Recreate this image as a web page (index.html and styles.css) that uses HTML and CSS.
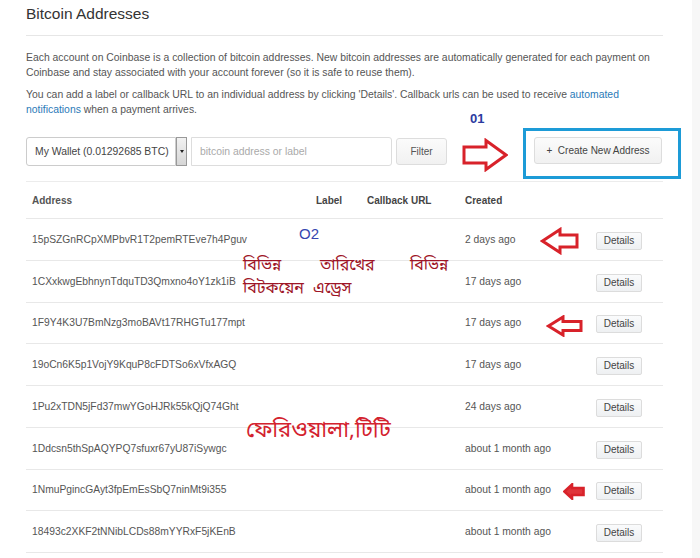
FILE: index.html
```html
<!DOCTYPE html>
<html>
<head>
<meta charset="utf-8">
<link rel="stylesheet" href="styles.css">
</head>
<body>
<div class="page">
  <div class="main">
    <h1 class="title">Bitcoin Addresses</h1>
    <div class="rule"></div>
    <p class="para">Each account on Coinbase is a collection of bitcoin addresses. New bitcoin addresses are automatically generated for each payment on Coinbase and stay associated with your account forever (so it is safe to reuse them).</p>
    <p class="para">You can add a label or callback URL to an individual address by clicking 'Details'. Callback urls can be used to receive <a class="link">automated</a> <a class="link">notifications</a> when a payment arrives.</p>

    <div class="toolbar">
      <div class="filters">
        <div class="select">My Wallet (0.01292685 BTC)</div>
        <div class="caret"><span class="tri"></span></div>
        <div class="input">bitcoin address or label</div>
        <div class="btn filter">Filter</div>
      </div>
      <div class="btn create">+&nbsp; Create New Address</div>
    </div>

    <div class="table">
      <div class="row head">
        <div class="c addr">Address</div>
        <div class="c">Label</div>
        <div class="c">Callback URL</div>
        <div class="c">Created</div>
        <div class="c"></div>
      </div>
      <div class="row"><div class="c addr">15pSZGnRCpXMPbvR1T2pemRTEve7h4Pguv</div><div class="c"></div><div class="c"></div><div class="c">2 days ago</div><div class="c"><span class="details">Details</span></div></div>
      <div class="row"><div class="c addr">1CXxkwgEbhnynTdquTD3Qmxno4oY1zk1iB</div><div class="c"></div><div class="c"></div><div class="c">17 days ago</div><div class="c"><span class="details">Details</span></div></div>
      <div class="row"><div class="c addr">1F9Y4K3U7BmNzg3moBAVt17RHGTu177mpt</div><div class="c"></div><div class="c"></div><div class="c">17 days ago</div><div class="c"><span class="details">Details</span></div></div>
      <div class="row"><div class="c addr">19oCn6K5p1VojY9KquP8cFDTSo6xVfxAGQ</div><div class="c"></div><div class="c"></div><div class="c">17 days ago</div><div class="c"><span class="details">Details</span></div></div>
      <div class="row"><div class="c addr">1Pu2xTDN5jFd37mwYGoHJRk55kQjQ74Ght</div><div class="c"></div><div class="c"></div><div class="c">24 days ago</div><div class="c"><span class="details">Details</span></div></div>
      <div class="row"><div class="c addr">1Ddcsn5thSpAQYPQ7sfuxr67yU87iSywgc</div><div class="c"></div><div class="c"></div><div class="c">about 1 month ago</div><div class="c"><span class="details">Details</span></div></div>
      <div class="row"><div class="c addr">1NmuPgincGAyt3fpEmEsSbQ7ninMt9i355</div><div class="c"></div><div class="c"></div><div class="c">about 1 month ago</div><div class="c"><span class="details">Details</span></div></div>
      <div class="row"><div class="c addr">18493c2XKF2tNNibLCDs88mYYRxF5jKEnB</div><div class="c"></div><div class="c"></div><div class="c">about 1 month ago</div><div class="c"><span class="details">Details</span></div></div>
    </div>
  </div>
  <div class="side"></div>

  <!-- annotations -->
  <div class="note n01">01</div>
  <div class="bluebox"></div>
  <svg class="arrow a-right" width="46" height="34" viewBox="0 0 46 34"><path d="M2,9 L24,9 L24,2.5 L44,17 L24,31.5 L24,25 L2,25 Z" fill="#fff" stroke="#d8222a" stroke-width="3" stroke-linejoin="miter"/></svg>
  <div class="note n02">O2</div>
  <div class="bn bn1"><span class="w1">বিভিন্ন</span><span class="w2">তারিখের</span><span class="w3">বিভিন্ন</span></div>
  <div class="bn bn2"><span class="w1">বিটকয়েন</span><span class="w4">এড্রেস</span></div>
  <div class="bn bn3">ফেরিওয়ালা,টিটি</div>
  <svg class="arrow a-l1" width="39" height="28" viewBox="0 0 39 28"><path d="M2.5,14 L20,2.5 L20,8 L37,8 L37,20 L20,20 L20,25.5 Z" fill="#fff" stroke="#d8222a" stroke-width="3"/></svg>
  <svg class="arrow a-l2" width="37" height="22" viewBox="0 0 37 22"><path d="M2.5,11 L17,2 L17,6.5 L35,6.5 L35,15.5 L17,15.5 L17,20 Z" fill="#fff" stroke="#d8222a" stroke-width="3"/></svg>
  <svg class="arrow a-l3" width="22" height="17" viewBox="0 0 22 17"><path d="M1.5,8.5 L9,1.5 L9,5 L20.5,5 L20.5,12 L9,12 L9,15.5 Z" fill="#e0343a" stroke="#d8222a" stroke-width="2.6"/></svg>
</div>
</body>
</html>
```

FILE: styles.css
```css
html, body {
  margin: 0;
  padding: 0;
  background: #fff;
}
body {
  font-family: "Liberation Sans", Arial, sans-serif;
  color: #555;
}
.page {
  position: relative;
  display: flex;
  width: 700px;
  min-height: 558px;
  overflow: hidden;
}
.main {
  width: 637px;
  padding: 0 29px 0 26px;
  flex: none;
}
.side {
  flex: 1;
  background: #f7f7f7;
}
.title {
  margin: 0;
  padding-top: 4px;
  font-size: 15.5px;
  line-height: 20px;
  font-weight: normal;
  color: #333;
}
.rule {
  margin-top: 11px;
  border-top: 1px solid #e6e6e6;
}
.para {
  margin: 14px 0 0;
  font-size: 10.4px;
  line-height: 15px;
  color: #555;
}
.para + .para {
  margin-top: 7px;
}
.link {
  color: #2a7ab8;
}
.toolbar {
  margin-top: 20px;
  display: flex;
  justify-content: space-between;
  align-items: flex-start;
}
.filters {
  display: flex;
  align-items: flex-start;
}
.select {
  width: 150px;
  height: 29px;
  box-sizing: border-box;
  border: 1px solid #ccc;
  border-radius: 3px 0 0 3px;
  padding-left: 8px;
  font-size: 10.4px;
  line-height: 27px;
  color: #444;
  background: #fff;
}
.caret {
  width: 11px;
  height: 29px;
  box-sizing: border-box;
  border: 1px solid #999;
  background: linear-gradient(#f2f2f2, #d6d6d6);
  display: flex;
  align-items: center;
  justify-content: center;
}
.tri {
  width: 0;
  height: 0;
  border-left: 2.5px solid transparent;
  border-right: 2.5px solid transparent;
  border-top: 3px solid #222;
}
.input {
  margin-left: 4px;
  width: 201px;
  height: 29px;
  box-sizing: border-box;
  border: 1px solid #ddd;
  border-radius: 0 3px 3px 0;
  padding-left: 8px;
  font-size: 10.4px;
  line-height: 27px;
  color: #aaa;
}
.btn {
  box-sizing: border-box;
  border: 1px solid #ddd;
  border-radius: 3px;
  background: linear-gradient(#fbfbfb, #f1f1f1);
  font-size: 10px;
  color: #555;
  text-align: center;
}
.filter {
  margin-left: 4px;
  margin-top: 1px;
  width: 51px;
  height: 27px;
  line-height: 25px;
}
.create {
  width: 128px;
  height: 27px;
  line-height: 25px;
  color: #444;
  margin-right: 1px;
}
.table {
  margin-top: 15px;
  border-top: 1px solid #ececec;
}
.row {
  display: grid;
  grid-template-columns: 284px 51px 98px 131px 1fr;
  align-items: center;
  height: 41.75px;
  box-sizing: border-box;
  border-bottom: 1px solid #e8e8e8;
  font-size: 10.3px;
  color: #555;
}
.row.head {
  height: 37px;
  font-weight: bold;
  font-size: 10px;
  color: #444;
}
.c {
  padding-left: 6px;
  white-space: nowrap;
}
.row .c.addr {
  color: #555;
}
.details {
  display: inline-block;
  width: 46px;
  height: 18px;
  box-sizing: border-box;
  margin-top: 3px;
  border: 1px solid #dcdcdc;
  border-radius: 2px;
  background: linear-gradient(#fafbfc, #eef0f2);
  font-size: 10px;
  line-height: 16px;
  text-align: center;
  color: #444;
}

/* annotations overlay */
.note {
  position: absolute;
  color: #2b3ba0;
}
.n01 {
  left: 470px;
  top: 119px;
  font-size: 13px;
  font-weight: bold;
  line-height: 12px;
  height: 12px;
  margin-top: -6px;
}
.n02 {
  left: 299px;
  top: 226px;
  font-size: 15px;
  line-height: 16px;
  color: #3646b0;
  font-weight: 300;
}
.bluebox {
  position: absolute;
  left: 523px;
  top: 128px;
  width: 158px;
  height: 51px;
  box-sizing: border-box;
  border: 3px solid #1d9bd7;
}
.arrow {
  position: absolute;
  display: block;
}
.a-right { left: 462px; top: 138px; }
.a-l1 { left: 540px; top: 227px; }
.a-l2 { left: 546px; top: 315px; }
.a-l3 { left: 563px; top: 483px; }
.bn {
  position: absolute;
  font-family: "Noto Sans Bengali", "Noto Serif Bengali", "Lohit Bengali", "FreeSerif", sans-serif;
  color: #9e1527;
  font-size: 16px;
  line-height: 20px;
  white-space: nowrap;
}
.bn span { position: absolute; top: 0; }
.bn1 { left: 243px; top: 256px; }
.bn2 { left: 243px; top: 279px; }
.w1 { left: 0; }
.w2 { left: 77px; }
.w3 { left: 167px; }
.w4 { left: 70px; }
.bn3 {
  left: 246px;
  top: 418px;
  font-size: 22px;
  line-height: 28px;
  color: #d3222e;
}
```
